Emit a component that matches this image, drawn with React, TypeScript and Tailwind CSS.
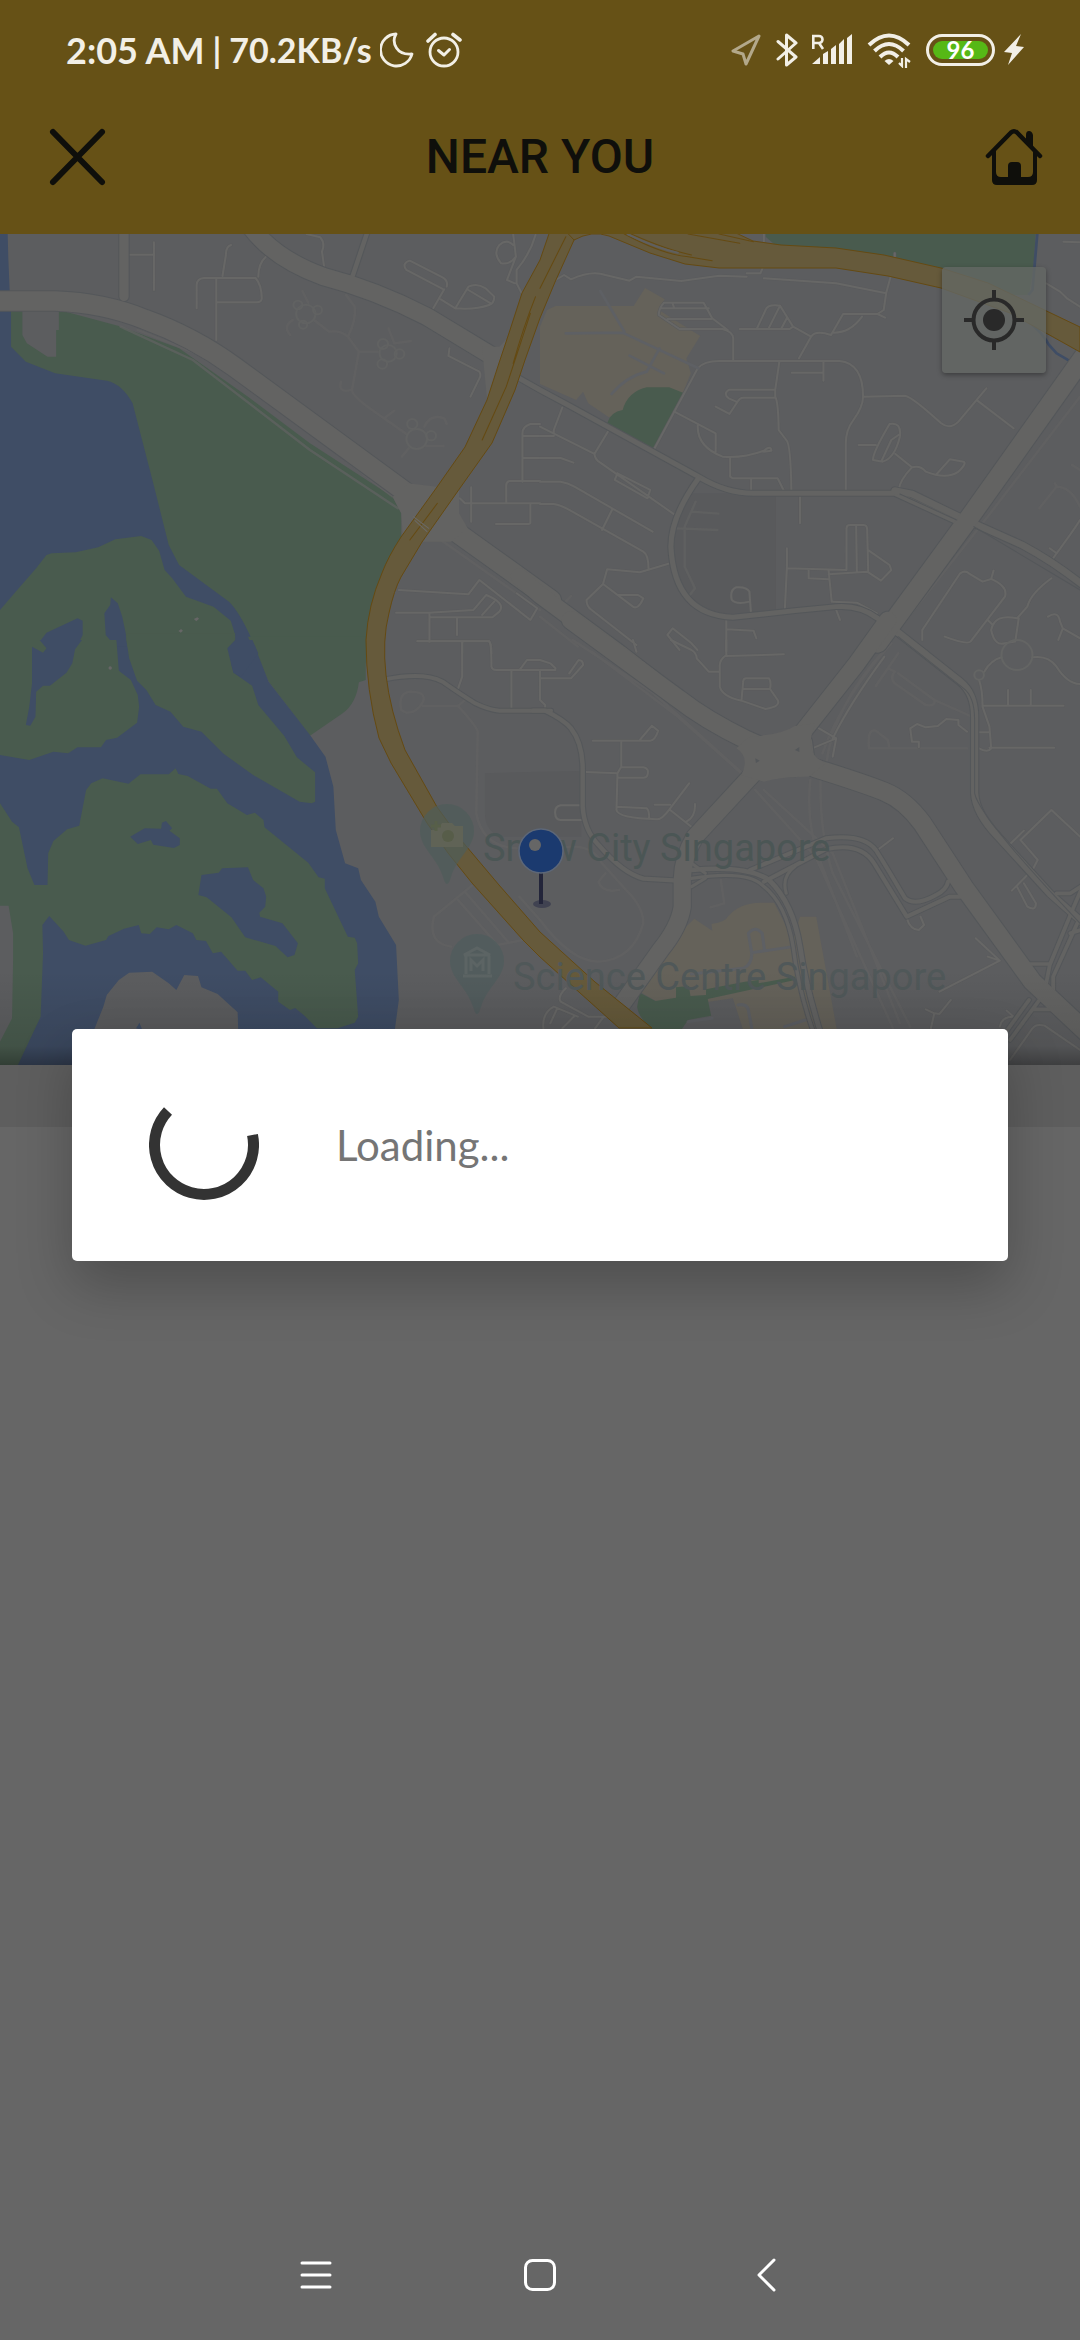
const LAND = "#5c5d5f";
const ROAD = "#636362";
const CASE = "#54575a";
const GREEN = "#495b4e";
const WATER = "#3f4d65";
const GOLD = "#665a3b";
const GOLD_EDGE = "#654a12";
const SAND = "#65625a";
const INK = "#0f0f0b";
const CREAM = "#f2efe6";

/* The map is made of four tiles; each has its own drawing space. */
const NW = "translate(0 230) scale(.3444 .3333)";
const NE = "translate(540 230) scale(.3444 .3333)";
const SW = "translate(0 640) scale(.3444 .3333)";
const SE = "translate(540 640) scale(.3444 .3333)";

function Lines({ at, d, w = 7, color = "#656564", opacity = 1 }: { at: string; d: string; w?: number; color?: string; opacity?: number }) {
  return <path transform={at} d={d} fill="none" stroke={color} strokeWidth={w} opacity={opacity} strokeLinecap="round" strokeLinejoin="round" />;
}

const majors: { at: string; d: string; w: number }[] = [
  { at: NW, d: "M-20 213H160Q300 218 420 268Q560 320 680 410L1180 788L1220 830L1290 880L1350 925L1600 1110", w: 58 },
  { at: NE, d: "M-60 1040L0 1095L230 1270L330 1350", w: 50 },
  { at: SE, d: "M90 -60L400 175Q480 240 600 300L700 345L800 385Q940 430 1000 455Q1060 480 1110 550L1230 740L1430 1025L1600 1190", w: 54 },
  { at: SE, d: "M620 320L770 305L780 385L650 395Z", w: 40 },
  { at: NW, d: "M715 -30Q780 80 940 140Q1090 180 1240 260L1440 385", w: 52 },
  { at: NE, d: "M1620 320L1235 880L980 1240", w: 56 },
  { at: SE, d: "M1010 -60L920 70L760 280L620 400L450 590Q415 650 413 720V800Q405 860 350 930L240 1090", w: 50 },
];

const mediums: { at: string; d: string; w: number }[] = [
  { at: NW, d: "M360 0V200", w: 27 },
  { at: NW, d: "M1067 5L1020 150", w: 13 },
  { at: NE, d: "M-60 445L0 480L90 530L460 740Q540 790 620 790H1030L1220 880", w: 15 },
  { at: NE, d: "M1030 782L1080 792L1220 862L1270 885L1400 945Q1500 1000 1600 1085", w: 20 },
  { at: NE, d: "M460 745Q380 860 380 950Q390 1155 560 1162L740 1142L860 1130Q930 1125 980 1165L1120 1270", w: 15 },
  { at: SE, d: "M1030 -30L1220 125Q1262 160 1262 230V460Q1265 520 1330 590L1480 760L1600 870", w: 21 },
  { at: SW, d: "M1118 118Q1230 95 1285 125Q1340 165 1380 190Q1420 210 1450 212H1600", w: 12 },
  { at: SE, d: "M-20 212H15Q70 240 90 265Q124 310 124 390V500Q128 570 170 615Q240 700 300 716L400 722", w: 13 },
  { at: SE, d: "M440 690Q600 675 665 720Q735 790 755 920Q770 1030 815 1180", w: 14 },
  { at: SE, d: "M440 715Q600 690 645 735Q715 790 735 920Q750 1050 795 1180", w: 10 },
  { at: SE, d: "M610 690L830 595Q940 580 975 630Q1000 670 1060 775Q1090 800 1150 765Q1180 750 1185 725", w: 12 },
  { at: SE, d: "M650 725L830 628Q930 605 970 670L1065 830L1190 770H1220", w: 12 },
  { at: SE, d: "M715 760Q700 710 740 680M440 740L480 715M440 670L480 700", w: 9 },
  { at: SE, d: "M1600 680L1550 800L1480 975L1470 1030M1560 850L1490 1010V1060M1500 760H1540L1570 740M1420 972H1480M1420 1080L1350 1180M1450 1080L1365 1200M1430 1108H1490M1540 880L1600 860", w: 11 },
];

const minors: { at: string; d: string }[] = [
  { at: NW, d: "M447 37V180M370 74H447M571 235V165Q572 145 592 144H742Q760 165 760 205Q760 217 745 217H630M628 145V330M671 45Q655 50 656 75L646 138M772 80Q750 100 750 140" },
  { at: NW, d: "M890 12L930 22Q945 40 935 65L942 118M1245 258L1290 178M1285 177L1180 120Q1165 100 1190 92L1285 142Q1302 152 1297 170M1280 208L1322 235L1360 170Q1385 158 1410 175L1435 200Q1435 220 1420 225Q1380 240 1322 235M1360 180L1425 220" },
  { at: NW, d: "M1490 12L1498 80Q1480 105 1455 100Q1430 70 1450 45Q1470 25 1490 45M1555 15Q1540 70 1500 120V160L1515 190M1498 80L1472 150L1495 160M1305 355L1302 378L1392 425Q1398 435 1392 445L1366 500" },
  { at: NW, d: "M1568 582H1540Q1517 590 1517 610V755M1517 618H1568M1517 684H1568M1568 753H1480Q1470 755 1470 765V820M1335 805L1350 820H1568M1368 772V875M1540 825V878Q1540 882 1530 882H1440" },
  { at: NW, d: "M1158 1080L1360 1093L1392 1050L1540 1170L1560 1135L1500 1090M1150 1148H1245L1375 1140L1412 1095Q1470 1120 1450 1145L1430 1162H1250M1247 1150V1235M1327 1165V1215M1400 1155L1435 1115M1212 1233H1420Q1427 1240 1427 1270M1342 1235V1270" },
  { at: NE, d: "M45 150L70 135L90 148Q150 120 190 135L260 152L280 140L410 153L520 137L600 140M600 130H640L650 105M650 145L860 160L1005 190L1018 140M1005 190L998 240L980 252M650 12V40M1030 70V82" },
  { at: NE, d: "M545 300L500 265L475 218H360Q345 235 345 255L405 297H530Q560 305 561 325V390M350 235H490M370 267H498M385 220L390 235M580 297H725L735 290L697 227Q660 222 655 240L630 295M697 227L665 293M718 262L700 297M735 290L787 320L752 385M787 320Q800 300 845 315L880 252H980L1002 263M850 308Q900 310 935 260" },
  { at: NE, d: "M330 660L458 415Q475 393 520 393H870Q938 400 938 500Q938 530 910 570Q888 600 888 640V785M695 395L683 480V500Q692 515 693 600L715 630Q728 640 730 785M731 428H823V452M823 395V428M683 479H550Q530 490 548 505L570 515M683 503H590Q580 503 575 513L550 552L510 530M938 500L1060 497Q1080 500 1165 580Q1190 600 1215 575L1296 475M1270 512L1375 595" },
  { at: NE, d: "M390 545L510 610V665M458 585Q455 650 530 680Q590 685 650 662Q670 645 672 662L650 665M552 683V740L560 745H690L707 780M613 745V780M755 795V880M925 645H975M967 690Q965 670 1015 582Q1050 575 1045 620Q1030 685 995 695L967 690M992 692L1020 630L1045 612M1032 672L1080 712Q1045 750 1042 778M1080 712Q1105 705 1120 725Q1180 750 1215 725Q1240 700 1230 695L1190 688L1152 732" },
  { at: NE, d: "M890 1020V895Q890 885 900 885H940Q950 885 950 900L953 1025M918 887L920 1025M717 955V1010L711 1138M717 1015L890 1020M780 1020V1045L838 1048M838 1022L847 1115M838 1033L950 1025L990 1052L1020 1020L1015 1005L955 962M850 1115L920 1118L978 1150M860 1140L871 1170M613 1155L608 1085Q600 1070 570 1072Q550 1080 557 1110Q570 1125 608 1115M541 1165V1265M541 1198L620 1202L628 1225" },
  { at: NE, d: "M65 532L40 600V618H0M0 590L158 672L200 600M158 672Q160 690 175 698L395 857M225 730L217 750L312 805L320 780L225 730M0 684H60L97 698M0 755H60Q80 758 100 770L327 905M0 822H40Q60 825 85 840L300 965Q315 975 315 1015M210 838L180 900M378 1000L290 1027L195 1018L183 1062L135 1110Q135 1130 150 1140L280 1245M183 1062L270 1130Q285 1140 300 1105L285 1095L228 1095M457 1260L440 1240L385 1195L370 1215L405 1260" },
  { at: NE, d: "M1110 1230V1200L1220 1030Q1235 1020 1245 1030L1285 1055L1310 1047L1317 1022M1310 1047Q1360 1070 1350 1100L1250 1235Q1240 1245 1175 1220M1485 1045Q1425 1090 1415 1130L1385 1165Q1320 1150 1310 1200Q1320 1250 1350 1240L1380 1235L1390 1165M1300 1170L1315 1185M1475 1160Q1505 1140 1510 1175L1518 1195L1505 1230M1518 1195L1568 1225M1480 1000L1500 970Q1550 900 1568 870M1480 955L1500 970M1470 160L1510 185L1530 205L1568 230M1520 35L1568 37" },
  { at: SW, d: "M1212 4H1420Q1427 10 1427 80Q1430 90 1440 90H1568M1342 4V110L1327 155M1485 92V205M1510 88L1530 60H1568" },
  { at: SE, d: "M0 92V180L15 195V210M0 60L30 70L45 85M0 90H45M0 115H90L125 75Q125 60 112 60L85 100M270 0L280 35M380 0L440 30Q455 40 455 55L490 95H520M541 0V45Q520 60 522 80V140Q530 170 585 182L590 125Q590 115 600 115H665Q672 125 668 147L690 180Q700 200 655 207L585 182M541 48L708 43M588 147H668" },
  { at: SE, d: "M153 302H320Q335 300 343 272L325 257L290 300M236 305V380L225 400L133 396M236 382H300Q318 385 312 405Q310 413 300 413H228M225 400L222 510Q225 535 340 538Q355 538 378 505L433 430M222 500L310 505Q317 510 317 535M333 494H378M378 510L445 565M450 492Q452 530 425 545M122 496H60Q42 500 44 520Q45 540 60 540H122" },
  { at: SE, d: "M1285 197H1520M1359 150V197M1425 150V197M1255 277H1305M1305 323H1493M1275 120Q1285 150 1285 200L1305 260L1310 325Q1300 340 1275 325M1340 52Q1310 60 1290 95M1430 52Q1475 45 1500 80Q1530 130 1568 132M1100 322V305L1080 305L1075 265L1095 252L1120 262L1155 258L1180 237L1215 240V255L1240 275" },
  { at: SE, d: "M980 630L1025 595M1065 835Q1075 870 1100 870L1115 855L1105 830M1160 1055L1335 962L1265 895M1335 962L1300 950M1120 1108L1145 1120L1135 1165M1145 1120L1160 1122L1193 1080M1365 1260L1430 1165Q1440 1150 1465 1157L1568 1230M1335 1160Q1340 1130 1375 1130L1355 1112M1395 600L1485 510L1568 590M1395 600L1445 660L1425 700M1405 572L1365 612M1370 752L1420 700M1385 740L1415 800Q1440 815 1440 790L1405 730" },
  { at: SE, d: "M790 325L860 295L850 350M810 265L860 295M850 295Q900 190 1000 50" },
  { at: SE, d: "M75 1045Q50 1070 60 1085L140 1130H195M10 1165Q5 1120 40 1100L110 1130M65 1165L100 1128M30 1150L50 1105M160 1165L185 1130" },
];

const faint: { at: string; d: string }[] = [
  { at: NW, d: "M878 183L895 218M850 270Q820 290 843 315M912 270L955 305Q990 300 1010 320L1042 365H1097M1005 195L1030 230Q1035 270 1010 320M1042 365L1022 480Q1020 500 1115 565L1180 612M1128 295L1145 340L1193 333M990 455Q980 490 1022 480M1115 565L1145 542M1167 680L1187 655M1232 590Q1250 550 1290 565L1297 582M1235 648H1288" },
  { at: NW, d: "M350 290L560 390L900 660L1155 835M400 300L640 400L1140 800M1280 930L1568 1140" },
  { at: NE, d: "M452 815L420 890V1010L450 1075L435 1095M440 845L518 851M395 895L515 900M0 1160L110 1250M75 1115L90 1098M1545 705L1568 720M1450 835L1500 770Q1540 770 1568 830M1495 760L1500 770M1568 500L1300 860L1040 1200" },
  { at: SW, d: "M1370 737L1260 830Q1240 910 1310 920M1330 780L1445 915L1520 900M1350 755L1475 905M1508 770L1568 840M1227 198H1330Q1385 260 1387 275L1383 520Q1400 620 1500 625M1165 210Q1155 160 1190 155Q1240 155 1228 185Q1210 220 1180 218L1165 210M1330 198L1350 180" },
  { at: SE, d: "M95 0L330 160L620 430M150 35L400 230L585 400M625 450L800 650L1025 1165M650 450L850 640L1045 1150M785 420Q770 560 820 680L920 950M815 410Q810 570 850 700L1075 1160M1020 10Q880 170 820 340M1000 30Q850 200 830 380M955 325H1240M955 320Q950 265 975 272L1010 300L1015 325M1040 40L975 138M1010 85L1030 95Q1015 115 1030 130L1120 195Q1150 200 1145 180L1040 100M1145 180L1250 228" },
  { at: SE, d: "M0 840Q90 965 170 965Q270 960 300 850Q300 800 250 750L180 670Q150 610 70 622M190 700L170 725Q180 760 230 750M525 720L535 790L495 802" },
];

/* Small loops around the housing blocks. */
const loops: { at: string; x: number; y: number; r: number }[] = [
  { at: NW, x: 888, y: 252, r: 28 },
  { at: NW, x: 865, y: 225, r: 13 },
  { at: NW, x: 922, y: 240, r: 13 },
  { at: NW, x: 880, y: 284, r: 12 },
  { at: NW, x: 1127, y: 370, r: 25 },
  { at: NW, x: 1112, y: 342, r: 15 },
  { at: NW, x: 1160, y: 372, r: 14 },
  { at: NW, x: 1110, y: 402, r: 14 },
  { at: NW, x: 1210, y: 627, r: 30 },
  { at: NW, x: 1197, y: 582, r: 15 },
  { at: NW, x: 1252, y: 617, r: 14 },
];

function Ring({ at, x, y, r, color = "#646564" }: { at: string; x: number; y: number; r: number; color?: string }) {
  return <circle transform={at} cx={x} cy={y} r={r} fill="none" stroke={color} strokeWidth="6" />;
}

const highway =
  "M552 225L540 260L522 293L509 333L499 363L487 400L465 447L437 487L401 537Q388 557 382 573Q368 605 366 640Q366 690 379 738L391 763L427 823L448 853L472 883L523 940L540 957L619 1028H652L595 982L540 932L499 885L461 840L437 807L405 750Q390 710 386 675Q382 640 389 613Q394 590 401 577L422 542L460 488L492 443L515 390L525 360L540 318L555 282L574 240L590 225Z";

function CityMap() {
  return (
    <svg viewBox="0 234 1080 831" preserveAspectRatio="xMidYMid slice" className="block h-full w-full" aria-label="Map" role="img">
      <defs>
        <linearGradient id="fade" x1="0" y1="0" x2="0" y2="1">
          <stop offset="0" stopColor="#000" stopOpacity="0" />
          <stop offset="0.8" stopColor="#000" stopOpacity="0.1" />
          <stop offset="1" stopColor="#000" stopOpacity="0.32" />
        </linearGradient>
      </defs>
      <rect y="234" width="1080" height="831" fill={LAND} />

      <g transform={NW}>
        <path fill={GREEN} d="M28 240H172L345 288L520 355L720 500L900 640L1140 800L1165 850V920L1110 1030L1075 1150L1062 1300H0V240Z" />
        <path fill={WATER} d="M0 0H22L24 80L28 180L32 250V350L75 395L160 430L310 452Q355 462 385 520L445 760L490 945L520 1005L665 1115Q700 1150 745 1260V1300H0Z" />
        <path fill={LAND} d="M65 240H171V300H163V380H138L78 340L65 315Z" />
        <path fill={GREEN} d="M0 1140L50 1080L105 1015L135 975L150 970L220 967L285 952L335 928L410 918L440 930L462 962L478 1020L500 1045L540 1100L620 1130L670 1172L683 1215V1262H0Z" />
        <path fill={WATER} d="M92 1250L110 1256L135 1262L115 1235L135 1208L225 1165L240 1172V1215L218 1262H92ZM322 1102L342 1120L355 1160L365 1210L371 1262H345L307 1215L303 1150L320 1125Z" />
        <path fill="#666" d="M563 1167l10-5 5 4-8 8zM518 1203l8-6 5 5-6 6z" />
      </g>
      <g transform={SW}>
        <path fill={GREEN} d="M720 -10H1062V120L1042 127Q1035 190 995 220L900 287L780 125Z" />
        <path fill={WATER} d="M0 20H740L780 125L900 285L945 350L968 440L975 570L1002 670L1040 685L1048 720L1090 785L1100 830L1150 915L1158 1080L1147 1165V1275H0Z" />
        <path fill={GREEN} d="M683 -20L672 75L678 98L732 137L750 195L825 287L862 352L915 397V485L905 490L870 485L735 405L650 342L585 275L532 260L495 215L452 195L425 150L398 122L375 55L367 0V-20Z" />
        <path fill={WATER} d="M660 25L683 0H733L750 40L700 110L678 98L672 75Z" />
        <path fill={GREEN} d="M0 0H338L345 92L380 120L400 165L404 200L398 248L340 293L308 300L293 322H225L198 340L155 335L85 360L0 345Z" />
        <path fill={WATER} d="M93 20L125 38L135 25L115 0H238L218 28L210 70L193 98L145 137H125L105 155L103 230L88 257L75 255L85 200L93 130Z" />
        <path fill={GREEN} d="M230 557L250 450L265 430L298 415L373 431L408 403H490L510 385L518 402L545 408L612 446H630L660 490L717 525L740 518L765 540L768 562L895 668L925 712L943 716V745L1010 890L1030 893L1037 910L1040 970L1030 990L1040 1130L1030 1148L980 1165H920L885 1128L857 1104L842 1110L808 1085V1055L757 1012L732 1020L712 992H690L642 935L618 940L598 903L570 900L560 880L512 855L490 868L455 862L435 882L410 880L403 855L360 866L315 888L308 900L248 917L200 900L185 875L143 828L123 855L125 940L118 1130L52 1275H0V490L35 545L55 562L80 685L100 735H138L140 640L155 603L195 568Z" />
        <path fill={LAND} d="M0 797H25L38 880V960L35 1135L0 1205ZM275 1165L300 1100L310 1065L345 1020L375 998L442 995L490 1030L512 1050L535 1005L575 1008L585 1042L632 1062L690 1117L695 1275H230Z" />
        <path fill={WATER} d="M378 590L420 565L468 566L470 548L482 543L500 565L492 572L522 595V615L505 624L445 614L438 600L400 612ZM585 705L635 698L645 685L720 682L735 720L765 745L773 770L770 800L753 818L755 830L820 850L865 910L855 945L835 952L800 918L712 892L672 832L600 772L576 765ZM395 1165L405 1148L413 1170Z" />
        <path fill="#595a5c" d="M1408 400L1568 395V590H1450Q1408 570 1408 520Z" />
        <circle cx="320" cy="84" r="5" fill="#666" />
      </g>
      <g transform={NE}>
        <path fill={GREEN} d="M655 0H1440L1432 120L1420 195H1250L1165 115L1000 75L700 60L655 20Z" />
        <path fill={SAND} d="M0 290L20 240L45 228H272L305 174L362 208L345 240L465 318L425 385L438 430L415 488H370L200 562L140 520L125 485L105 510L0 462Z" />
        <path fill={GREEN} d="M195 580Q205 545 240 540Q255 485 310 472L375 472L415 488L326 660Z" />
        <path fill="none" stroke={WATER} strokeWidth="8" d="M1444 10L1430 180L1418 195M1420 275Q1460 310 1478 345L1500 370L1550 400" />
        <path fill="#595a5c" d="M470 790H685V1150H540Q400 1130 380 960Q385 850 430 790Z" />
      </g>
      <g transform={SE}>
        <path fill="#595a5c" d="M0 395L120 393V590H0Z" />
        <path fill={SAND} d="M290 1055L420 865L448 836L500 872L498 852Q540 845 545 830Q580 788 640 788H680L735 900L755 830H802L862 1170H590L560 1075L490 1085L340 1085Z" />
        <path fill={GREEN} d="M290 1058L335 1083L395 1073V1042L432 1038L437 1068L482 1065V1048L595 1025L635 1020V1030L740 1010V1020L487 1077L497 1127L430 1140L410 1170H325Q285 1130 282 1100Z" />
      </g>

      {faint.map((r) => <Lines key={r.d} {...r} w={7} color="#626363" opacity={0.7} />)}
      {minors.map((r) => <Lines key={r.d} {...r} w={9} color="#5a5b5d" />)}
      {minors.map((r) => <Lines key={r.d} {...r} w={6} color="#676766" />)}
      <Lines at={NE} w={8} color="#5e6064" d="M75 310L240 308L460 415M175 183L245 305M347 355L310 425Q250 440 208 492M260 377L360 430" />
      <Lines at={SE} w={9} color="#5e6064" d="M440 1002L590 985Q615 975 615 940L605 880Q625 855 645 880L652 930M615 938L735 920M500 1135L430 1145M575 1095Q600 1090 605 1110L615 1165M710 1160L770 1140" />
      {loops.map((l) => <Ring key={`${l.x}-${l.y}`} {...l} color="#616262" />)}
      <Ring at={SE} x={1385} y={45} r={45} />
      <Ring at={SE} x={1275} y={105} r={14} />

      {[...mediums, ...majors].map((r) => <Lines key={r.d} {...r} w={r.w + 6} color={CASE} />)}
      {[...mediums, ...majors].map((r) => <Lines key={r.d} {...r} color={ROAD} />)}
      <path transform={NW} fill={ROAD} d="M1400 350H1450L1478 320V480L1415 515L1405 410ZM1185 760L1268 770H1333V850L1358 895L1310 935H1225L1170 925L1165 850L1140 800Z" />
      <path transform={SE} fill={ROAD} d="M608 290Q700 285 740 258L800 250Q770 320 805 355L830 370L780 410Q700 410 650 425L585 405Q610 350 570 325Z" />
      <Lines at={NE} w={3} color={CASE} d="M1045 792L1210 870M1260 890L1568 1080" />
      <Lines at={SE} w={3} color={CASE} d="M1040 -10L1230 145Q1262 170 1262 240V460Q1275 530 1568 850" />
      <path transform={SE} fill={CASE} d="M625 355L638 362L627 369ZM740 330L753 321V336Z" />

      <g stroke={GOLD_EDGE} strokeWidth="1" fill={GOLD}>
        <path d={highway} />
        <path d="M574 240Q592 230 609 236L650 253L685 264L719 268H771L836 268L888 276L941 288L1010 313L1080 352V327L988 283L941 268L884 255L836 248L781 245L753 241L719 225H560Z" />
      </g>
      <Lines at={NE} w={3} color={GOLD_EDGE} d="M245 12Q360 75 430 80L500 92M430 12L580 40M520 12L620 35M75 20L0 175M265 12Q370 60 440 75" />
      <Lines at={NE} w={6} color="#5f5f5f" d="M255 13Q340 55 400 68" />
      <Lines at={NW} w={3} color={GOLD_EDGE} d="M1555 200Q1520 290 1490 400M1540 250L1470 470L1400 630M1270 820L1190 930" />
      <Lines at={NW} w={3} color="#6b6966" d="M1200 860L1245 895M1205 872L1240 905" />

      <path fill="#4f5c5a" fillOpacity=".7" d="M447 804a27 27 0 0 1 27 27c0 17-17 26-23 46q-4 14-8 0c-6-20-23-29-23-46a27 27 0 0 1 27-27Z" />
      <path fill="#606356" d="M436 826h4l2-3h10l3 3h8v21h-32v-17h5Z" />
      <circle cx="448" cy="836" r="6" fill="#575d49" />
      <path stroke="#575f49" strokeWidth="3" d="M431 826h10m-5-5v10" />
      <path fill="#4f5c5c" fillOpacity=".7" d="M477 934a27 27 0 0 1 27 27c0 17-17 26-23 46q-4 14-8 0c-6-20-23-29-23-46a27 27 0 0 1 27-27Z" />
      <path fill="none" stroke="#5c6464" strokeWidth="3" d="M463 976h29M466 974V956m23 18V956M464 955L477 948L490 955ZM471 971V960l6 6 6-6v11" />
      <g fill="#4b5655" fontFamily="Roboto, sans-serif" fontSize="38">
        <text x="483" y="861">Snow City Singapore</text>
        <text x="513" y="990" fill="#505859">Science Centre Singapore</text>
      </g>
      <ellipse cx="542" cy="904" rx="9" ry="4" fill="#34374c" opacity=".7" />
      <path stroke="#23253a" strokeWidth="4" d="M541 872V904" />
      <circle cx="541" cy="851" r="22" fill="#1b3a6f" stroke="#5d6778" strokeWidth="1.500" />
      <circle cx="535" cy="845" r="6" fill="#666" />
      <rect y="970" width="1080" height="95" fill="url(#fade)" />
    </svg>
  );
}

function StatusBar() {
  return (
    <div className="flex h-20 items-center justify-between pt-5 pr-[56px] pb-0 pl-[66px] text-[#f2efe6]">
      <div className="flex items-center text-[34px] leading-none font-bold whitespace-nowrap">
        <span className="text-[36px]">2:05 AM</span>
        <span className="ml-2">|</span>
        <span className="ml-2">70.2KB/s</span>
        <svg width="34" height="36" viewBox="0 0 34 36" className="ml-2" fill="none" stroke={CREAM} strokeWidth="2.800" strokeLinejoin="round">
          <path d="M16 2A16 16 0 1 0 32 22Q21 23 16.500 16T16 2Z" />
        </svg>
        <svg width="36" height="36" viewBox="0 0 36 36" className="ml-3" fill="none" stroke={CREAM} strokeWidth="2.800" strokeLinecap="round" strokeLinejoin="round">
          <circle cx="18" cy="20" r="14" />
          <path d="M12.500 18.500L18 23L23.500 17.500" strokeWidth="3" />
          <path d="M2 9L9 2.500M34 8L27 2.500" strokeWidth="3.600" />
        </svg>
      </div>
      <div className="flex items-center">
        <svg width="30" height="32" viewBox="0 0 30 32" fill="none" stroke="#b3a88a" strokeWidth="3" strokeLinejoin="round">
          <path d="M28 2L2 17L12 20L15 30Z" />
        </svg>
        <svg width="22" height="36" viewBox="0 0 22 36" className="ml-[15px]" fill="none" stroke={CREAM} strokeWidth="3" strokeLinejoin="round" strokeLinecap="round">
          <path d="M2 9.500L20 25L10.500 33V3L20 11L2 27" />
        </svg>
        <svg width="42" height="32" viewBox="0 0 42 32" className="ml-[13px]" fill={CREAM}>
          <path d="M1 30L9 23V30ZM12 20L17 17V30H12ZM20 15L25 11V30H20ZM28 10L33 5V30H28ZM36 4L41 0V30H36Z" />
          <path fill="none" stroke={CREAM} strokeWidth="2.600" d="M2.300 15V2H8a3.500 3.500 0 0 1 0 7H2M8 9L12 15" />
        </svg>
        <svg width="44" height="36" viewBox="0 0 44 36" className="ml-[14px]" fill="none" stroke={CREAM} strokeWidth="4">
          <path d="M2 13Q22 -6 42 13M7.500 19Q22 5 36.500 19M13 25Q22 16 31 25" />
          <path d="M17.500 29Q22 25 26.500 29L22 33Z" fill={CREAM} stroke="none" />
          <path d="M35 26V34L32 31M39 36V27L43 30" strokeWidth="2.200" />
        </svg>
        <div className="ml-[15px] flex h-8 w-[69px] rounded-full border-[3px] border-[#f2efe6] p-1">
          <span className="flex flex-1 items-center justify-center rounded-full bg-[#56b816] text-[24px] leading-none font-bold text-white">96</span>
        </div>
        <svg width="20" height="32" viewBox="0 0 20 32" className="ml-[9px]" fill={CREAM}>
          <path d="M17 0L0 18L8 19L4 31L20 13L12 12Z" />
        </svg>
      </div>
    </div>
  );
}

function TitleBar() {
  return (
    <div className="flex h-[154px] items-center justify-between pr-9 pl-12 text-[#0f0f0b]">
      <button type="button" aria-label="Close">
        <svg width="60" height="60" viewBox="0 0 60 60" stroke={INK} strokeWidth="6" strokeLinecap="round">
          <path d="M5 5L54 55M54 5L5 55" />
        </svg>
      </button>
      <h1 className="mr-3 flex-1 text-center font-[Roboto,sans-serif] text-[48px] leading-none font-medium">NEAR YOU</h1>
      <button type="button" aria-label="Home">
        <svg width="60" height="60" viewBox="0 0 60 60" fill={INK}>
          <path fill="none" stroke={INK} strokeWidth="4.500" strokeLinecap="round" strokeLinejoin="round" d="M4 29L27 5.500Q30 3 33 5.500L56 29" />
          <path d="M42 17V8Q42 4 45 4T49 8V24Z" />
          <path fillRule="evenodd" d="M8 24L12 21V45Q12 50 17 50H24V39Q24 35 28 35H33Q37 35 37 39V50H44Q49 50 49 45V21L53 24V53Q53 58 48 58H13Q8 58 8 53Z" />
        </svg>
      </button>
    </div>
  );
}

export default function App() {
  return (
    <div className="relative flex min-h-screen flex-col bg-[#666666] font-[Lato,sans-serif]">
      <header className="bg-[#665116]">
        <StatusBar />
        <TitleBar />
      </header>
      <main className="flex-1">
        <section className="relative h-[831px]">
          <CityMap />
          <button
            type="button"
            aria-label="Use my location"
            className="absolute top-[33px] right-[34px] flex h-[106px] w-[104px] items-center justify-center rounded-[4px] bg-[#646864]/80 shadow-[0_2px_5px_rgba(0,0,0,0.35)]"
          >
            <svg width="60" height="60" viewBox="0 0 60 60" fill="none" stroke="#292929" strokeWidth="4">
              <circle cx="30" cy="30" r="20.500" />
              <circle cx="30" cy="30" r="11" fill="#292929" stroke="none" />
              <path d="M30 0V10M30 50V60M0 30H10M50 30H60" />
            </svg>
          </button>
        </section>
        <div className="h-[62px] bg-[#5e5e5e]" />
      </main>
      <nav className="flex h-[130px] items-center justify-center gap-[190px]">
        <button type="button" aria-label="Recent apps">
          <svg width="34" height="34" viewBox="0 0 34 34" stroke="#fff" strokeWidth="3" strokeLinecap="round">
            <path d="M3 5H31M3 17H31M3 29H31" />
          </svg>
        </button>
        <button type="button" aria-label="Home screen">
          <svg width="34" height="34" viewBox="0 0 34 34" fill="none" stroke="#fff" strokeWidth="3">
            <rect x="2.500" y="2.500" width="29" height="29" rx="7" />
          </svg>
        </button>
        <button type="button" aria-label="Back">
          <svg width="34" height="34" viewBox="0 0 34 34" fill="none" stroke="#fff" strokeWidth="3" strokeLinecap="round" strokeLinejoin="round">
            <path d="M27 2L12 17L27 32" />
          </svg>
        </button>
      </nav>

      <div className="absolute inset-0 flex items-center px-[72px] pt-20 pb-[130px]">
        <div role="dialog" aria-label="Loading" className="flex h-[232px] flex-1 items-center rounded-[5px] bg-white pl-[77px] shadow-[0_24px_56px_rgba(0,0,0,0.24)]">
          <svg width="110" height="110" viewBox="-55 -55 110 110" fill="none" stroke="#333" strokeWidth="11">
            <path d="M-36 -34A49.500 49.500 0 1 0 48.500 -10" />
          </svg>
          <p className="ml-[77px] text-[42px] leading-none text-[#757575]">Loading...</p>
        </div>
      </div>
    </div>
  );
}
